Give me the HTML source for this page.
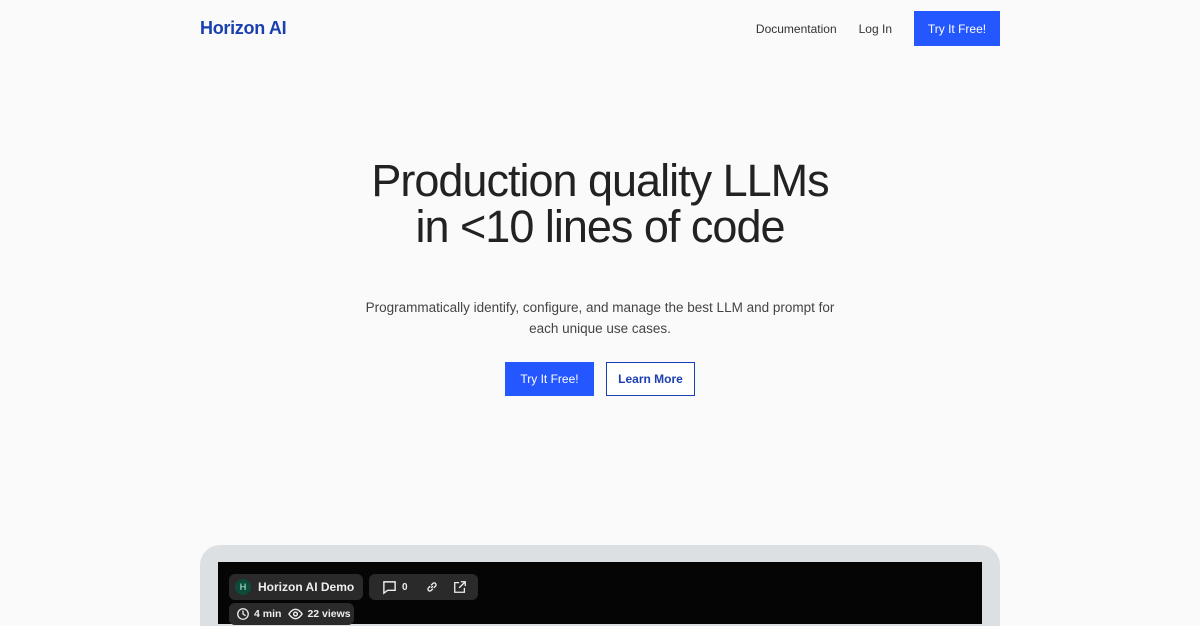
<!DOCTYPE html>
<html style="width:1200px;height:626px;overflow:hidden"><head><style>
*{margin:0;padding:0;box-sizing:border-box}
body{width:1200px;height:626px;overflow:hidden;background:#fafafa;font-family:"Liberation Sans",sans-serif;position:relative;color:#222}
.logo{position:absolute;left:200px;top:18px;font-size:18px;font-weight:bold;color:#1a3fb0;letter-spacing:-0.3px}
.nav{position:absolute;top:11px;right:200px;display:flex;align-items:center;font-size:12px;color:#333}
.nav span{margin-right:22px}
.btn{background:#2457ff;color:#fff;display:inline-flex;align-items:center;justify-content:center}
.nav .btn{width:86px;height:35px;margin:0}
h1{position:absolute;top:158px;left:0;width:1200px;text-align:center;font-weight:normal;font-size:45px;line-height:46px;color:#222;letter-spacing:-1px}
p.sub{position:absolute;top:297px;width:1200px;text-align:center;font-size:13.5px;line-height:21px;color:#444}
.b1{position:absolute;left:505px;top:362px;width:89px;height:34px;font-size:12px}
.b2{position:absolute;left:606px;top:362px;width:89px;height:34px;font-size:12px;border:1px solid #1a3fb0;color:#1a3fb0;background:#fff;display:flex;align-items:center;justify-content:center;font-weight:bold}
.frame{position:absolute;left:200px;top:545px;width:800px;height:81px;background:#dde0e3;border-radius:20px 20px 0 0}
.video{position:absolute;left:218px;top:562px;width:764px;height:62px;background:#050505}
.pill{position:absolute;background:#2a2a2a;border-radius:6px;color:#eee;font-size:12px;font-weight:bold;display:flex;align-items:center}
</style></head><body>
<div class="logo">Horizon AI</div>
<div class="nav"><span>Documentation</span><span>Log In</span><div class="btn">Try It Free!</div></div>
<h1>Production quality LLMs<br>in &lt;10 lines of code</h1>
<p class="sub">Programmatically identify, configure, and manage the best LLM and prompt for<br>each unique use cases.</p>
<div class="btn b1">Try It Free!</div>
<div class="b2">Learn More</div>
<div class="frame"></div>
<div class="video"></div>
<div class="pill" style="left:229px;top:574px;width:134px;height:26px;padding-left:6px"><span style="width:16px;height:16px;border-radius:50%;background:#0d4a3a;color:#cfe;font-size:9px;font-weight:normal;display:inline-flex;align-items:center;justify-content:center;margin-right:7px">H</span>Horizon AI Demo</div>
<div class="pill" style="left:369px;top:574px;width:109px;height:26px;padding-left:13px">
<svg width="15" height="15" viewBox="0 0 16 16" fill="none" stroke="#eee" stroke-width="1.5"><path d="M2 2h12v9H6l-4 3z"/></svg><span style="margin-left:5px;font-size:10px">0</span>
<svg style="margin-left:17px" width="14" height="14" viewBox="0 0 16 16" fill="none" stroke="#eee" stroke-width="1.5"><path d="M7 9l2-2M6 7L4 9a2 2 0 003 3l2-2M10 9l2-2a2 2 0 00-3-3L7 6"/></svg>
<svg style="margin-left:14px" width="14" height="14" viewBox="0 0 16 16" fill="none" stroke="#eee" stroke-width="1.5"><path d="M13 9v5H2V3h5M9 2h5v5M14 2L7 9"/></svg></div>
<div class="pill" style="left:229px;top:603px;width:125px;height:22px;padding-left:7px;font-size:10.5px">
<svg width="14" height="14" viewBox="0 0 16 16" fill="none" stroke="#eee" stroke-width="1.5"><circle cx="8" cy="8" r="6"/><path d="M8 4v4l3 2"/></svg><span style="margin:0 7px 0 4px">4 min</span>
<svg width="15" height="12" viewBox="0 0 16 12" fill="none" stroke="#eee" stroke-width="1.5"><path d="M1 6s3-5 7-5 7 5 7 5-3 5-7 5-7-5-7-5z"/><circle cx="8" cy="6" r="2"/></svg><span style="margin-left:4px">22 views</span></div>
</body></html>
